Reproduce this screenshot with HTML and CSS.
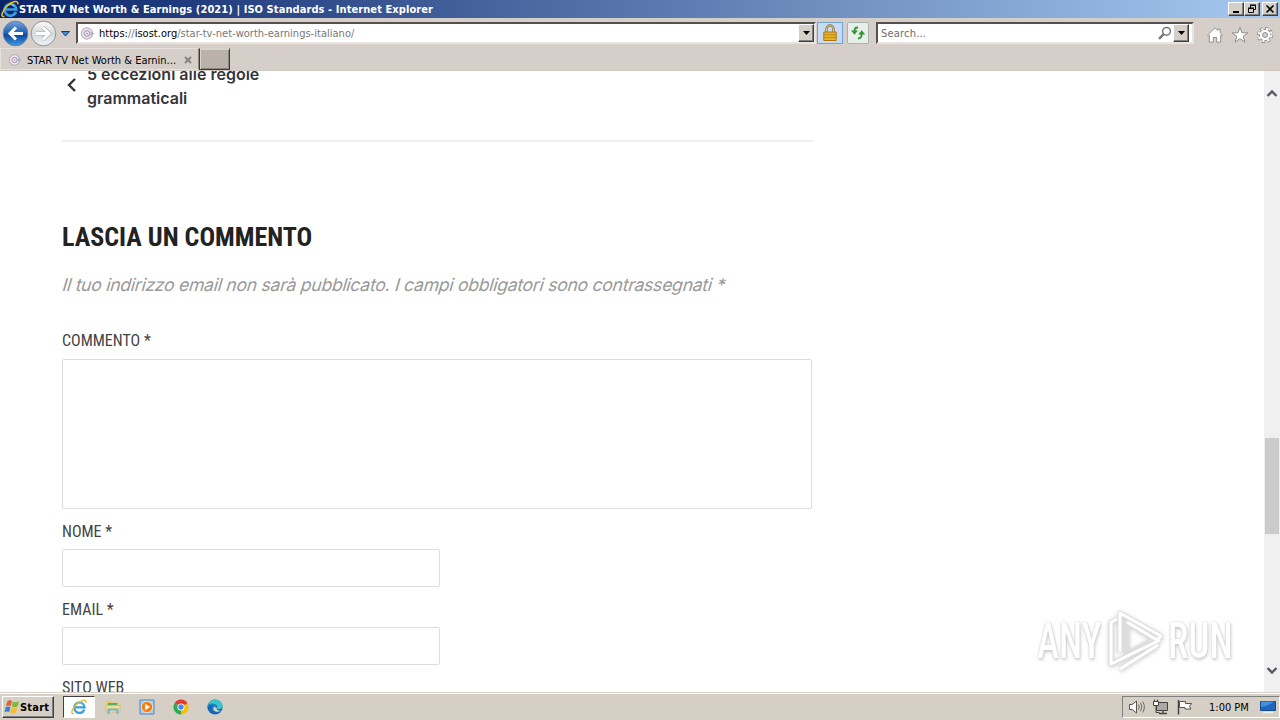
FILE: index.html
```html
<!DOCTYPE html>
<html lang="it">
<head>
    <meta charset="UTF-8">
    <meta name="viewport" content="width=device-width, initial-scale=1.0">
    <title>STAR TV Net Worth &amp; Earnings (2021) | ISO Standards</title>
    <link rel="stylesheet" href="styles.css">
</head>
<body>
    <svg class="defs" width="0" height="0">
        <defs>
            <linearGradient id="blue" x1="0" y1="0" x2="0" y2="1">
                <stop offset="0" stop-color="#6fa3dc"/>
                <stop offset=".5" stop-color="#1f5cb4"/>
                <stop offset=".55" stop-color="#0d459c"/>
                <stop offset="1" stop-color="#3d9be8"/>
            </linearGradient>
            <linearGradient id="grey" x1="0" y1="0" x2="0" y2="1">
                <stop offset="0" stop-color="#fafafa"/>
                <stop offset=".5" stop-color="#d5d9dc"/>
                <stop offset="1" stop-color="#eef3f6"/>
            </linearGradient>
            <symbol id="ie" viewBox="0 0 16 16">
                <path d="M13.3 10.5A5.2 5.2 0 1 1 13.6 8.4H4" fill="none" stroke="#3a9fe0" stroke-width="2.3"/>
                <path d="M5 5.8Q8.5 1.8 12 5.6" fill="none" stroke="#8fd2f5" stroke-width="1"/>
                <path d="M3 14.6C-1 15.6 1 9.5 5.5 5.3 9.5 1.5 15.7-.8 14.9 3.9" fill="none" stroke="#f0bc22" stroke-width="1.4"/>
            </symbol>
            <symbol id="favicon" viewBox="0 0 14 14">
                <circle cx="6.5" cy="7" r="5.2" fill="#f2eef4" stroke="#b5aabb" stroke-width="1.1"/>
                <circle cx="6.5" cy="7" r="2.6" fill="none" stroke="#b79db3" stroke-width="1.2"/>
                <circle cx="6.5" cy="7" r=".8" fill="#9c7d9e"/>
                <path d="M10 5.5l3.6 1.5L10 8.5z" fill="#91afd2"/>
            </symbol>
        </defs>
    </svg>

    <div class="titlebar">
        <svg class="title-icon" width="18" height="18"><use href="#ie"/></svg>
        <span class="title-text">STAR TV Net Worth &amp; Earnings (2021) | ISO Standards - Internet Explorer</span>
        <div class="win-buttons">
            <span class="win-btn"><svg width="14" height="12"><path d="M4 9h6" stroke="#000" stroke-width="2"/></svg></span>
            <span class="win-btn"><svg width="14" height="12"><path d="M5.500 5V2.500h5v4H9M5 2h6M3.500 5.500h5v4h-5zM3 5h6" fill="none" stroke="#000"/></svg></span>
            <span class="win-btn close"><svg width="14" height="12"><path d="M3.500 2.500l7 7M10.500 2.500l-7 7" stroke="#000" stroke-width="1.600"/></svg></span>
        </div>
    </div>

    <div class="navbar">
        <svg class="nav-arrows" width="76" height="30" viewBox="0 0 76 30">
            <circle cx="15.500" cy="15.500" r="12.300" fill="url(#blue)" stroke="#6b7f9c"/>
            <path d="M16 9.500l-6 6 6 6M10.500 15.500H23" fill="none" stroke="#fff" stroke-width="3"/>
            <circle cx="43.500" cy="15.500" r="12.300" fill="url(#grey)" stroke="#8c9299"/>
            <path d="M43 9.500l6 6-6 6M48.500 15.500H36" fill="none" stroke="#aaa" stroke-width="4"/>
            <path d="M43 9.500l6 6-6 6M48.500 15.500H36" fill="none" stroke="#fff" stroke-width="2.800"/>
            <path d="M61.500 13.500h8l-4 4.500z" fill="#3a93cf" stroke="#163f78"/>
        </svg>
        <div class="field address">
            <svg width="15" height="15"><use href="#favicon"/></svg>
            <span class="url">https:<i>//</i>isost.org<i>/star-tv-net-worth-earnings-italiano/</i></span>
            <span class="drop"><svg width="7" height="4"><path d="M0 0h7L3.500 4z"/></svg></span>
        </div>
        <span class="tool lock">
            <svg width="14" height="18" viewBox="0 0 14 18">
                <path d="M3.500 9V5a3.500 3.500 0 0 1 7 0v4" fill="none" stroke="#8a7440" stroke-width="2.400"/>
                <path d="M3.500 9V5a3.500 3.500 0 0 1 7 0v4" fill="none" stroke="#e0cf98" stroke-width=".9"/>
                <path d="M.8 8h12.400v8.500H.8z" fill="#eab52b" stroke="#a97812"/>
                <path d="M1 10.800h12M1 13.600h12" stroke="#bd8614"/>
            </svg>
        </span>
        <span class="tool refresh">
            <svg width="16" height="14" viewBox="0 0 16 14">
                <path d="M8 1.500Q4.500 1.500 4.500 5M8 12.500q3.700 0 3.700-4.500" fill="none" stroke="#2f9438" stroke-width="1.800"/>
                <path d="M1 4.400h7L4.500 8.800zM8.200 8.600h7l-3.500-4.400z" fill="#2f9438"/>
            </svg>
        </span>
        <div class="field search">
            <span class="placeholder">Search...</span>
            <svg class="glass" width="14" height="14"><circle cx="8.500" cy="5.300" r="3.900" fill="none" stroke="#77777b" stroke-width="1.500"/><path d="M5.700 8.200L1 12.800" stroke="#77777b" stroke-width="2.400"/></svg>
            <span class="drop"><svg width="7" height="4"><path d="M0 0h7L3.500 4z"/></svg></span>
        </div>
        <div class="commands">
            <svg width="18" height="18" viewBox="0 0 18 18"><path d="M1.500 9L9 1.800l2.800 2.700V3h2.400v3.800L16.500 9l-1 1-.8-.6v6.800h-4v-4.700H7.300v4.700h-4V9.400l-.8.6z" fill="#fff" stroke="#8f8f8f"/></svg>
            <svg width="18" height="18" viewBox="0 0 18 18"><path d="M9 1.300l2 5.500h5.800l-4.600 3.500 1.700 5.700L9 12.700 4.100 16l1.700-5.700L1.200 6.800H7z" fill="#fff" stroke="#8f8f8f"/></svg>
            <svg width="18" height="18" viewBox="0 0 18 18"><circle cx="9" cy="9" r="6.600" fill="none" stroke="#8f8f8f" stroke-width="3.200" stroke-dasharray="2.900 2.280"/><circle cx="9" cy="9" r="5.700" fill="#fff" stroke="#8f8f8f"/><circle cx="9" cy="9" r="6.300" fill="none" stroke="#fff" stroke-width="2.200" stroke-dasharray="2 2.950" stroke-dashoffset="-.3"/><circle cx="9" cy="9" r="2.500" fill="#d4d0c8" stroke="#8f8f8f"/></svg>
        </div>
    </div>

    <div class="tabs">
        <div class="tab">
            <svg width="14" height="14"><use href="#favicon"/></svg>
            <span class="tab-text">STAR TV Net Worth &amp; Earnin...</span>
            <svg class="tab-close" width="8" height="8"><path d="M1 1l6 6M7 1L1 7" stroke="#85817e" stroke-width="1.800"/></svg>
        </div>
        <div class="new-tab"></div>
    </div>

    <div class="viewport">
        <div class="content">
            <div class="post-nav">
                <svg width="10" height="14" viewBox="0 0 10 14"><path d="M8 1L2 7l6 6" fill="none" stroke="#35353c" stroke-width="2.400"/></svg>
                <span>5 eccezioni alle regole<br>grammaticali</span>
            </div>
            <h3>Lascia un commento</h3>
            <p class="notes">Il tuo indirizzo email non sarà pubblicato. I campi obbligatori sono contrassegnati *</p>
            <form>
                <label for="comment">Commento *</label>
                <textarea id="comment"></textarea>
                <label for="author">Nome *</label>
                <input id="author" type="text">
                <label for="email">Email *</label>
                <input id="email" type="text">
                <label>Sito web</label>
            </form>
        </div>
        <div class="scrollbar">
            <svg class="up" width="12" height="9"><path d="M1.500 7L6 2.500 10.500 7" fill="none" stroke="#55585c" stroke-width="2.300"/></svg>
            <div class="thumb"></div>
            <svg class="down" width="12" height="9"><path d="M1.500 2L6 6.500 10.500 2" fill="none" stroke="#55585c" stroke-width="2.300"/></svg>
        </div>
        <div class="watermark">
            <span class="any">ANY</span>
            <svg width="60" height="66" viewBox="0 0 60 66" fill="none" stroke-linejoin="round">
                <g stroke="#dedede" stroke-width="5">
                    <path d="M15 44V5l41 23-4 4-30-18v32l31-17"/>
                    <path d="M12 11l-6 3v42l49-24M15 61l38-24"/>
                </g>
                <g stroke="#fff" stroke-width="3">
                    <path d="M15 44V5l41 23-4 4-30-18"/>
                    <path d="M12 11l-6 3v42l49-24M15 61l38-24"/>
                </g>
            </svg>
            <span class="run">RUN</span>
        </div>
    </div>

    <div class="taskbar">
        <div class="start">
            <svg width="16" height="16" viewBox="0 0 16 16">
                <path d="M3.500 2Q6 .5 8 2L6.800 7Q4.500 5.800 2 7z" fill="#e8602c"/>
                <path d="M9 2.500Q11.500 4 15 2.300L13.500 7.500Q11 9 7.800 7.500z" fill="#7db83a"/>
                <path d="M1.800 8Q4.300 6.800 6.500 8.200L5.200 13Q3 11.800.5 13z" fill="#3a80cf"/>
                <path d="M7.500 8.600Q10 10 13.200 8.700L12 13.500Q9 15 6.300 13.500z" fill="#f2bd2a"/>
            </svg>
            <span>Start</span>
        </div>
        <div class="task active"><svg width="16" height="16"><use href="#ie"/></svg></div>
        <div class="task">
            <svg width="16" height="16" viewBox="0 0 16 16">
                <path d="M1 2h5l1 1.500h7V13H1z" fill="#e8c865"/>
                <path d="M3 4h9v2H3z" fill="#4fae73"/>
                <path d="M1 6.500h14V13H1z" fill="#f4df91" stroke="#d5b55a" stroke-width=".7"/>
                <path d="M3.500 15v-4.500h9V15" fill="none" stroke="#6eb5df" stroke-width="2"/>
            </svg>
        </div>
        <div class="task">
            <svg width="16" height="16" viewBox="0 0 16 16">
                <path d="M1 1h14v14H1z" fill="#a7cef0" stroke="#4b86c4"/>
                <circle cx="8" cy="8" r="5.600" fill="#ef7e17" stroke="#fff1dc" stroke-width=".7"/>
                <path d="M6.200 4.800L11 8l-4.800 3.200z" fill="#fff"/>
            </svg>
        </div>
        <div class="task">
            <svg width="16" height="16" viewBox="0 0 16 16">
                <path d="M8 8L1.500 4.250A7.500 7.500 0 0 1 14.500 4.250z" fill="#e33b2e"/>
                <path d="M8 8L1.500 4.250A7.500 7.500 0 0 0 8 15.500z" fill="#2da94f"/>
                <path d="M8 8l6.500-3.750A7.500 7.500 0 0 1 8 15.500z" fill="#fdbd00"/>
                <circle cx="8" cy="8" r="3.600" fill="#fff"/>
                <circle cx="8" cy="8" r="2.700" fill="#4688f1"/>
            </svg>
        </div>
        <div class="task">
            <svg width="16" height="16" viewBox="0 0 16 16">
                <circle cx="8" cy="8" r="7.600" fill="#1667b7"/>
                <path d="M.8 6.500C1.800 2.500 4.700.4 8 .4c4.500 0 7.600 3 7.600 6.400 0 2-1.500 3.500-3.800 3.500-1.400 0-2.500-.5-2.500-1.200 0-.5.700-.8.700-1.700C10 5.900 8.200 4.900 6.200 4.900 4 4.900 2 5.500.8 6.500z" fill="#3cc4c9"/>
                <path d="M6 7.500C5 10.500 7.500 13 11 12.800c1.500-.1 2.500-.6 3.500-1.200A4 4 0 0 1 9.300 9Q8 8.800 8.300 7.200z" fill="#d4d0c8"/>
                <path d="M.6 7.500C2 5 6 4.500 8.800 6.300 6.500 6.800 5 9 5.800 11.500" fill="none" stroke="#1d84c9" stroke-width="1.400"/>
            </svg>
        </div>
        <div class="tray">
            <svg width="18" height="16" viewBox="0 0 18 16"><path d="M1.500 5.500h2.700L8.500 2v12l-4.300-3.500H1.500z" fill="#fff" stroke="#55544f"/><path d="M10.500 5.500q1.500 2.500 0 5M12.500 3.800q2.700 4.200 0 8.400M14.700 2.500q3.400 5.500 0 11" fill="none" stroke="#6d6b66"/></svg>
            <svg width="17" height="16" viewBox="0 0 17 16"><path d="M3.500 3.500h11v8h-11z" fill="#aaa8a4" stroke="#44423f"/><path d="M6 14.500h8M10 12v2" stroke="#44423f" stroke-width="1.300"/><path d="M1.500.5v3M4.500.5v3M3 6v7.500h3.500" fill="none" stroke="#44423f"/><path d="M.5 2.500h5v4h-5z" fill="#fff" stroke="#44423f"/></svg>
            <svg width="17" height="16" viewBox="0 0 17 16"><path d="M1.500 1v14.500" stroke="#44423f" stroke-width="1.500"/><path d="M2.500 2.500h6v2h6l-2 3 1.500 2.500H8V8.500H2.500z" fill="#fff" stroke="#55544f"/></svg>
            <span class="clock">1:00 PM</span>
            <svg class="desktop" width="16" height="14" viewBox="0 0 16 14"><path d="M.5 1.500h15v9H.5z" fill="#1f66bd" stroke="#174a8c"/><path d="M1 7q7-.5 13-5.500H1z" fill="#4291da"/><path d="M3 12.500h10" stroke="#eee" stroke-width="1.500"/></svg>
        </div>
    </div>
</body>
</html>
```
FILE: styles.css
```css
* {
    box-sizing: border-box;
}
body {
    margin: 0;
    width: 1280px;
    height: 720px;
    overflow: hidden;
    display: flex;
    flex-direction: column;
    background: #d4d0c8;
    color: #000;
    font: 11px "DejaVu Sans Condensed", "DejaVu Sans", sans-serif;
    font-stretch: condensed;
}
svg {
    display: block;
    flex: none;
}
.defs {
    position: absolute;
}
.titlebar {
    height: 18px;
    flex: none;
    display: flex;
    align-items: center;
    padding: 0 2px 0 1px;
    background: linear-gradient(90deg, #0a246a, #a6caf0);
}
.title-text {
    color: #fff;
    font-weight: bold;
    white-space: nowrap;
    letter-spacing: 0.08px;
}
.win-buttons {
    display: flex;
    margin-left: auto;
}
.win-btn, .drop {
    display: flex;
    align-items: center;
    justify-content: center;
    background: #d4d0c8;
    border: 1px solid;
    border-color: #fff #404040 #404040 #fff;
    box-shadow: inset -1px -1px #808080;
}
.win-btn {
    width: 16px;
    height: 14px;
}
.close {
    margin-left: 2px;
}
.navbar {
    height: 30px;
    flex: none;
    display: flex;
    background: #d6cfc9;
}
.field {
    height: 22px;
    margin-top: 4px;
    display: flex;
    align-items: center;
    background: #fff;
    border: 2px solid;
    border-color: #55504d #e8e4df #e8e4df #55504d;
}
.address {
    width: 740px;
    padding-left: 2px;
}
.url {
    margin: 1px 0 0 4px;
    white-space: nowrap;
    letter-spacing: 0.02px;
}
.url i {
    font-style: normal;
    color: #777;
}
.drop {
    width: 16px;
    height: 18px;
    margin-left: auto;
}
.tool {
    height: 22px;
    margin-top: 4px;
    display: flex;
    align-items: center;
    justify-content: center;
    border: 1px solid #a9b4b0;
    background: #e8eeea;
}
.lock {
    width: 26px;
    margin-left: 1px;
    background: #c7dcf3;
    border-color: #72a3d8;
}
.refresh {
    width: 22px;
    margin: 4px 7px 0 4px;
    border-radius: 2px;
}
.search {
    width: 318px;
    padding: 0 3px;
}
.placeholder {
    color: #6d6d6d;
    margin-top: 1px;
    letter-spacing: 0.2px;
}
.glass {
    margin-left: auto;
}
.search .drop {
    margin-left: 1px;
}
.commands {
    display: flex;
    gap: 7px;
    padding: 8px 0 0 12px;
}
.tabs {
    height: 23px;
    flex: none;
    display: flex;
    background: #d6cfc9;
    border-bottom: 1px solid #d0c9c2;
}
.tab {
    width: 199px;
    display: flex;
    align-items: center;
    padding: 2px 6px 0 7px;
    border: 1px solid #e6e1dc;
    border-right-color: #8c8580;
}
.tab-text {
    margin-left: 5px;
    white-space: nowrap;
}
.tab-close {
    margin-left: auto;
}
.new-tab {
    width: 31px;
    height: 22px;
    background: #bab1aa;
    border: 1px solid #3e3a38;
    border-top-color: #d9d3cd;
    box-shadow: inset 1px 1px #d9d3cd, inset -1px -1px #8b8580;
}
.viewport {
    position: relative;
    flex: 1;
    min-height: 0;
    overflow: hidden;
    display: flex;
    justify-content: space-between;
    background: #fff;
}
.content {
    width: 813px;
    padding-left: 62px;
    font-family: Inter, sans-serif;
    font-stretch: normal;
}
.post-nav {
    display: flex;
    margin-top: -9px;
    height: 80px;
    padding-left: 5px;
    gap: 10px;
    border-bottom: 2px solid #efefef;
    color: #35353c;
    font-size: 16px;
    font-weight: 600;
    line-height: 24px;
}
.post-nav svg {
    margin-top: 16px;
}
h3 {
    margin: 80px 0 0;
    font: bold 26px/30px Roboto, sans-serif;
    font-stretch: condensed;
    text-transform: uppercase;
    color: #222;
}
/* slanted upright face, the italic has other letter shapes */
.notes {
    margin: 19px 0 0 1px;
    width: max-content;
    font-size: 17.6px;
    line-height: 28px;
    letter-spacing: -0.275px;
    color: #999;
    white-space: nowrap;
    transform: skewX(-16deg);
}
form {
    margin-top: 29px;
}
label {
    display: block;
    height: 30px;
    padding-top: 1px;
    font: 16px/24px Roboto, sans-serif;
    font-stretch: condensed;
    text-transform: uppercase;
    color: #444;
}
label:first-child {
    height: 31px;
}
textarea, input {
    display: block;
    border: 1px solid #ddd;
    border-radius: 2px;
    background: #fff;
    resize: none;
    outline: 0;
}
textarea {
    width: 750px;
    height: 150px;
    margin-bottom: 10px;
}
input {
    width: 378px;
    height: 38px;
    margin-bottom: 10px;
}
.scrollbar {
    width: 16px;
    display: flex;
    flex-direction: column;
    align-items: center;
    background: #f0f0f0;
}
.up {
    margin-top: 18px;
}
.thumb {
    width: 14px;
    height: 96px;
    margin-top: 340px;
    background: #cbcbcb;
}
.down {
    margin: auto 0 17px;
}
.watermark {
    position: absolute;
    left: 1037px;
    top: 537px;
    width: 194px;
    display: flex;
    align-items: center;
    font: 500 50px/66px Roboto, sans-serif;
    font-stretch: condensed;
    color: #fff;
    text-shadow: 0 0 2px #bbb, 1px 2px 4px #ccc;
}
.watermark span {
    width: 65px;
    transform: scaleX(.75);
    transform-origin: 0 50%;
}
.watermark svg {
    margin: 0 3px;
    filter: drop-shadow(0 1px 2px #ccc);
}
.taskbar {
    height: 28px;
    flex: none;
    display: flex;
    align-items: center;
    padding: 1px 0 0 2px;
    border-top: 1px solid #d4d0c8;
    box-shadow: inset 0 1px #fff;
    background: #d6cfc6;
}
.start {
    width: 52px;
    height: 22px;
    display: flex;
    align-items: center;
    padding-left: 1px;
    margin-right: 9px;
    border: 1px solid;
    border-color: #fff #404040 #404040 #fff;
    box-shadow: inset -1px -1px #808080;
    font-weight: bold;
    letter-spacing: 0.2px;
}
.task {
    width: 34px;
    height: 22px;
    display: flex;
    align-items: center;
    justify-content: center;
}
.active {
    width: 32px;
    margin-right: 1px;
    background: #fff;
    border: 1px solid;
    border-color: #404040 #fff #fff #404040;
}
.tray {
    width: 158px;
    height: 22px;
    margin-left: auto;
    display: flex;
    align-items: center;
    gap: 7px;
    padding-left: 5px;
    border: 1px solid;
    border-color: #808080 #fff #fff #808080;
}
.clock {
    margin-left: 8px;
    white-space: nowrap;
}
.desktop {
    margin-left: 4px;
}
```
